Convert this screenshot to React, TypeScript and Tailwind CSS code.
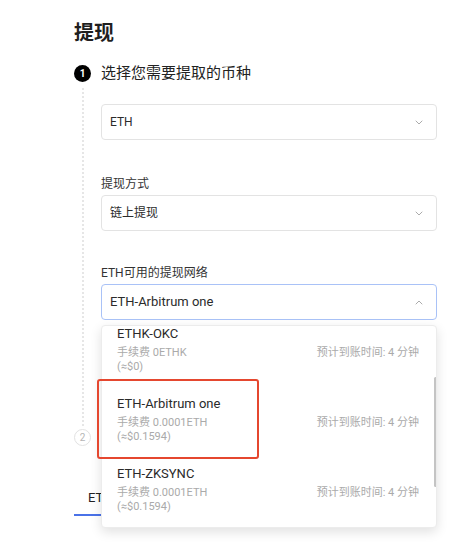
const networks = [
  { name: "ETHK-OKC", fee: "手续费 0ETHK", approx: "(≈$0)" },
  { name: "ETH-Arbitrum one", fee: "手续费 0.0001ETH", approx: "(≈$0.1594)" },
  { name: "ETH-ZKSYNC", fee: "手续费 0.0001ETH", approx: "(≈$0.1594)" },
];

function Chevron({ up }: { up?: boolean }) {
  return (
    <svg width="8" height="5" viewBox="0 0 8 5" fill="none" className="text-[#ababab]">
      <path
        d={up ? "M1 4L4 1L7 4" : "M1 1L4 4L7 1"}
        stroke="currentColor"
        strokeWidth="1"
        strokeLinecap="round"
        strokeLinejoin="round"
      />
    </svg>
  );
}

function Select({ value, focused, big }: { value: string; focused?: boolean; big?: boolean }) {
  return (
    <div
      className={`flex h-[36px] items-center justify-between rounded-[4px] border pl-[8px] pr-[13px] ${
        focused ? "border-[#a9c2f7]" : "border-[#e3e3e3]"
      }`}
    >
      <span className={`${big ? "text-[13px]" : "text-[12px]"} text-[#2b2b2b]`}>{value}</span>
      <Chevron up={focused} />
    </div>
  );
}

export default function App() {
  return (
    <div
      className="relative min-h-[546px] bg-white pl-[74px] pt-[20px]"
      style={{ fontFamily: 'Roboto, "Noto Sans CJK SC", sans-serif' }}
    >
      <h1 className="text-[20px] font-bold leading-[26px] text-[#1f1f1f]">提现</h1>

      <div className="mt-[19px] flex items-center gap-[10px]">
        <span className="flex h-[17px] w-[17px] items-center justify-center rounded-full bg-black text-[10px] font-bold text-white">
          1
        </span>
        <span className="text-[15px] leading-[17px] text-[#222]">选择您需要提取的币种</span>
      </div>

      <div className="flex">
        <div className="flex w-[18px] justify-center pt-[6px]">
          <div className="h-full border-l-2 border-dotted border-[#e6e6e6]" />
        </div>
        <div className="w-[336px] pb-[106px] pl-[9px] pt-[22px]" style={{ boxSizing: "content-box" }}>
          <Select value="ETH" />
          <div className="mt-[36px] text-[12px] leading-[16px] text-[#333]">提现方式</div>
          <div className="mt-[3px]">
            <Select value="链上提现" />
          </div>
          <div className="mt-[34px] text-[12px] leading-[16px] text-[#333]">ETH可用的提现网络</div>
          <div className="mt-[3px]">
            <Select value="ETH-Arbitrum one" focused big />
          </div>
        </div>
      </div>

      <div className="mt-[3px] flex items-center">
        <span className="flex h-[17px] w-[17px] items-center justify-center rounded-full border border-[#e2e2e2] text-[10px] text-[#b5b5b5]">
          2
        </span>
      </div>

      <div className="mt-[43px] flex">
        <div className="border-b-2 border-[#4a72e8] pb-[7px] pl-[14px] pr-[6px] text-[13px] leading-[18px] text-[#222]">
          ET
        </div>
      </div>

      <div className="absolute left-[101px] top-[325px] h-[203px] w-[336px] overflow-hidden rounded-[4px] border border-[#ececec] bg-white shadow-[0_4px_12px_rgba(0,0,0,0.12)]">
        <div className="-mt-[14px]">
          {networks.map((n) => (
            <div key={n.name} className="h-[70px] pl-[15px] pr-[17px] pt-[14px]">
              <div className="text-[13px] leading-[16px] text-[#2a2a2a]">{n.name}</div>
              <div className="mt-[4px] flex justify-between text-[11px] leading-[14px] text-[#aaaaaa]">
                <div>
                  <div>{n.fee}</div>
                  <div>{n.approx}</div>
                </div>
                <div>预计到账时间: 4 分钟</div>
              </div>
            </div>
          ))}
        </div>
        <div className="absolute left-[332px] top-[51px] h-[110px] w-[3px] rounded-full bg-[#c4c4c4]" />
      </div>

      <div className="absolute left-[97px] top-[379px] h-[80px] w-[162px] rounded-[3px] border-2 border-[#e5472f]" />
    </div>
  );
}
